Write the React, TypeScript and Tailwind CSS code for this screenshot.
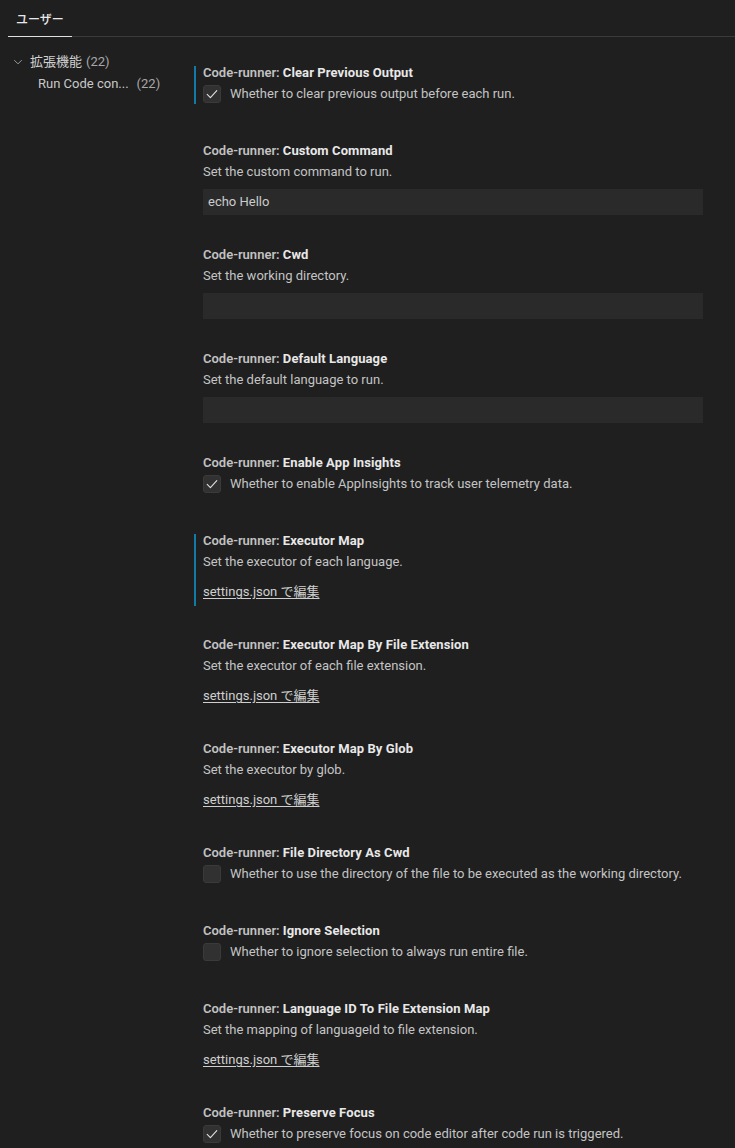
import React from 'react';

type Setting =
  | { kind: 'check'; name: string; desc: string; checked: boolean; focused?: boolean }
  | { kind: 'input'; name: string; desc: string; value: string }
  | { kind: 'link'; name: string; desc: string; focused?: boolean };

const settings: Setting[] = [
  { kind: 'check', name: 'Clear Previous Output', desc: 'Whether to clear previous output before each run.', checked: true, focused: true },
  { kind: 'input', name: 'Custom Command', desc: 'Set the custom command to run.', value: 'echo Hello' },
  { kind: 'input', name: 'Cwd', desc: 'Set the working directory.', value: '' },
  { kind: 'input', name: 'Default Language', desc: 'Set the default language to run.', value: '' },
  { kind: 'check', name: 'Enable App Insights', desc: 'Whether to enable AppInsights to track user telemetry data.', checked: true },
  { kind: 'link', name: 'Executor Map', desc: 'Set the executor of each language.', focused: true },
  { kind: 'link', name: 'Executor Map By File Extension', desc: 'Set the executor of each file extension.' },
  { kind: 'link', name: 'Executor Map By Glob', desc: 'Set the executor by glob.' },
  { kind: 'check', name: 'File Directory As Cwd', desc: 'Whether to use the directory of the file to be executed as the working directory.', checked: false },
  { kind: 'check', name: 'Ignore Selection', desc: 'Whether to ignore selection to always run entire file.', checked: false },
  { kind: 'link', name: 'Language ID To File Extension Map', desc: 'Set the mapping of languageId to file extension.' },
  { kind: 'check', name: 'Preserve Focus', desc: 'Whether to preserve focus on code editor after code run is triggered.', checked: true },
];

function Checkbox({ checked }: { checked: boolean }) {
  return (
    <div className="w-[18px] h-[18px] shrink-0 rounded-[3px] bg-[#313131] border border-[#3a3a3a] flex items-center justify-center">
      {checked && (
        <svg width="16" height="16" viewBox="0 0 16 16" fill="none">
          <path d="M3.2 8.4 L6.4 11.6 L12.8 4.6" stroke="#e0e0e0" strokeWidth="1.1" strokeLinecap="round" strokeLinejoin="round" />
        </svg>
      )}
    </div>
  );
}

function Title({ name }: { name: string }) {
  return (
    <div className="leading-[13px] h-4 whitespace-nowrap">
      <span className="text-[#c2c2c2] font-semibold">Code-runner: </span>
      <span className="text-[#e8e8e8] font-bold tracking-[0.1px]">{name}</span>
    </div>
  );
}

function SettingItem({ s }: { s: Setting }) {
  const focused = s.kind !== 'input' && s.focused;
  const bar = focused ? 'border-[#127aa6]' : 'border-transparent';

  if (s.kind === 'check') {
    return (
      <div className={`border-l-2 ${bar} pl-[7px] pb-px mb-10`}>
        <Title name={s.name} />
        <div className="mt-[3px] flex items-center gap-[9px] h-[18px]">
          <Checkbox checked={s.checked} />
          <span className="text-[#c4c4c4] whitespace-nowrap leading-[18px]">{s.desc}</span>
        </div>
      </div>
    );
  }

  if (s.kind === 'input') {
    return (
      <div className={`border-l-2 ${bar} pl-[7px] pb-px mb-8`}>
        <Title name={s.name} />
        <div className="mt-[3px] text-[#c4c4c4] leading-[18px]">{s.desc}</div>
        <div className="mt-[8px] h-[26px] w-[500px] bg-[#2a2a2a] px-[5px] flex items-center text-[#cccccc]">
          {s.value}
        </div>
      </div>
    );
  }

  return (
    <div className={`border-l-2 ${bar} pl-[7px] pb-[5px] mb-8`}>
      <Title name={s.name} />
      <div className="mt-[3px] text-[#c4c4c4] leading-[18px]">{s.desc}</div>
      <div className="mt-[12px] leading-[18px]">
        <span className="text-[#cfcfcf] underline underline-offset-2">settings.json で編集</span>
      </div>
    </div>
  );
}

export default function App() {
  return (
    <div
      className="w-[735px] h-[1148px] overflow-hidden bg-[#1f1f1f] text-[13px]"
      style={{ fontFamily: 'Roboto, "Noto Sans CJK JP", sans-serif' }}
    >
      {/* Tabs */}
      <div className="flex pt-[11px] pl-2">
        <div className="w-16 h-[26px] border-b border-[#e0e0e0] flex justify-center">
          <span className="text-[#e8e8e8] text-[12px] leading-[18px] font-medium">ユーザー</span>
        </div>
        <div className="flex-1 border-b border-[#3a3a3a]" />
      </div>

      <div className="flex">
        {/* Tree */}
        <div className="w-[194px] shrink-0 pt-[14px] pl-[13px] text-[#c4c4c4]">
          <div className="flex items-center h-[22px]">
            <svg width="10" height="10" viewBox="0 0 16 16" fill="none" className="mr-[7px]">
              <path d="M2 5 L8 11 L14 5" stroke="#a8a8a8" strokeWidth="1.4" />
            </svg>
            <span className="text-[#d0d0d0]">拡張機能</span>
            <span className="ml-1 text-[#a8a8a8]">(22)</span>
          </div>
          <div className="flex items-center h-[22px] pl-[25px]">
            <span className="text-[#c8c8c8]">Run Code con...</span>
            <span className="ml-[8px] text-[#a8a8a8]">(22)</span>
          </div>
        </div>

        {/* Settings list */}
        <div className="flex-1 pt-[29px]">
          {settings.map((s) => (
            <SettingItem key={s.name} s={s} />
          ))}
        </div>
      </div>
    </div>
  );
}
